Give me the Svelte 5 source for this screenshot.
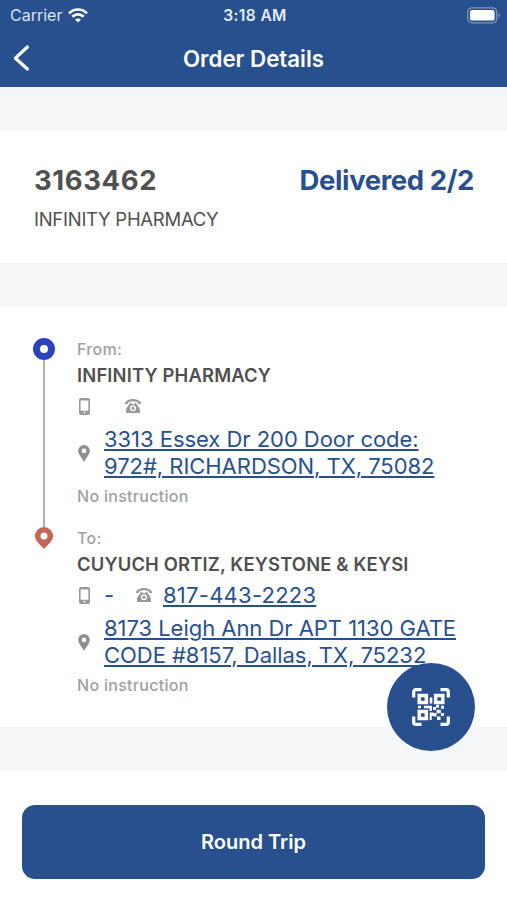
<script lang="ts">
  interface Stop {
    kind: 'from' | 'to';
    label: string;
    name: string;
    mobile: string;
    phone: string;
    address: string[];
    note: string;
  }

  const order = { id: '3163462', status: 'Delivered 2/2', client: 'INFINITY PHARMACY' };

  const stops: Stop[] = [
    {
      kind: 'from',
      label: 'From:',
      name: 'INFINITY PHARMACY',
      mobile: '',
      phone: '',
      address: ['3313 Essex Dr 200 Door code:', '972#, RICHARDSON, TX, 75082'],
      note: 'No instruction'
    },
    {
      kind: 'to',
      label: 'To:',
      name: 'CUYUCH ORTIZ, KEYSTONE & KEYSI',
      mobile: '-',
      phone: '817-443-2223',
      address: ['8173 Leigh Ann Dr APT 1130 GATE', 'CODE #8157, Dallas, TX, 75232'],
      note: 'No instruction'
    }
  ];
</script>

<div class="screen">
  <header>
    <div class="status-bar">
      <div class="carrier">
        <span>Carrier</span>
        <svg width="20" height="15" viewBox="0 0 20 15" fill="none" stroke="#fff" stroke-width="2.7">
          <path d="M1 5.4C6 .2 14 .2 19 5.4" />
          <path d="M4.3 8.8c3.2-3.2 8.2-3.2 11.4 0" />
          <path d="M10 14.6l-3-3c1.7-1.6 4.3-1.6 6 0z" fill="#fff" stroke="none" />
        </svg>
      </div>
      <span class="time">3:18 AM</span>
      <div class="battery">
        <svg width="34" height="17" viewBox="0 0 34 17">
          <rect x=".8" y=".8" width="29" height="15" rx="4.3" fill="none" stroke="#7e97c0" stroke-width="1.3" />
          <rect x="3" y="3" width="24.6" height="10.6" rx="2.2" fill="#fff" />
          <path d="M31.6 6.2c1.8.6 1.8 3.8 0 4.4z" fill="#7e97c0" />
        </svg>
      </div>
    </div>
    <div class="nav-bar">
      <button class="back" aria-label="Back">
        <svg width="18" height="28" viewBox="0 0 18 28" fill="none" stroke="#fff" stroke-width="3.2" stroke-linecap="round" stroke-linejoin="round">
          <path d="M15.4 3L3.4 14.2l12 10.8" />
        </svg>
      </button>
      <h1>Order Details</h1>
    </div>
  </header>

  <section class="summary">
    <div class="summary-row">
      <span class="order-id">{order.id}</span>
      <span class="order-status">{order.status}</span>
    </div>
    <div class="client">{order.client}</div>
  </section>

  <section class="route">
    {#each stops as stop}
      <div class="stop">
        <div class="track">
          {#if stop.kind === 'from'}
            <span class="dot"></span>
            <span class="line"></span>
          {:else}
            <svg class="pin" width="18" height="22" viewBox="0 0 18 22" fill="#c46655">
              <path fill-rule="evenodd" d="M9 0a9 9 0 0 1 9 9c0 4.6-4.6 8.4-9 13C4.600 17.400 0 13.600 0 9a9 9 0 0 1 9-9zm0 5.600a3.500 3.500 0 1 0 0 7 3.500 3.500 0 0 0 0-7z" />
            </svg>
          {/if}
        </div>
        <div class="details">
          <div class="label">{stop.label}</div>
          <div class="name">{stop.name}</div>
          <div class="contacts">
            <svg width="11" height="17" viewBox="0 0 11 17" fill="#999">
              <path fill-rule="evenodd" d="M2 0h7a2 2 0 0 1 2 2v13a2 2 0 0 1-2 2H2a2 2 0 0 1-2-2V2a2 2 0 0 1 2-2zm-.4 2.400v10.300h7.800V2.400zM5.500 13.800a.9.9 0 1 0 0 1.800.9.9 0 0 0 0-1.800z" />
            </svg>
            <span class="mobile" class:blank={!stop.mobile}>{stop.mobile}</span>
            <svg class="handset" width="16" height="14" viewBox="0 0 16 14" fill="#999">
              <path d="M0 5.200V3.700C1.500 1.200 4.500 0 8 0s6.500 1.200 8 3.700v1.500l-3.400-.7V2.900C9.800 1.900 6.200 1.900 3.400 2.900v1.600z" />
              <path fill-rule="evenodd" d="M4.700 3.800h1.500v1.100h3.600V3.800h1.500v1.300c1.500 1.800 3.400 3.700 3.700 6V14H1v-2.900c.3-2.300 2.200-4.200 3.700-6zM8 6.200a3 3 0 1 0 0 6 3 3 0 0 0 0-6z" />
              <circle cx="8" cy="9.200" r="1.600" />
            </svg>
            {#if stop.phone}
              <span class="link phone">{stop.phone}</span>
            {/if}
          </div>
          <div class="address">
            <svg width="12" height="17" viewBox="0 0 11 16" fill="#8e8e93">
              <path fill-rule="evenodd" d="M5.500 0A5.500 5.500 0 0 1 11 5.500C11 9 7.500 12 5.500 16 3.500 12 0 9 0 5.500A5.500 5.500 0 0 1 5.500 0zm0 3.400a2.200 2.200 0 1 0 0 4.400 2.200 2.200 0 0 0 0-4.400z" />
            </svg>
            <div class="address-lines">
              {#each stop.address as line}
                <div class="link">{line}</div>
              {/each}
            </div>
          </div>
          <div class="note">{stop.note}</div>
        </div>
      </div>
    {/each}
  </section>

  <footer>
    <button class="round-trip">Round Trip</button>
  </footer>

  <button class="scan" aria-label="Scan code">
    <svg width="38" height="38" viewBox="0 0 38 38" fill="#fff">
      <path d="M9.500 1.700H3.700a2 2 0 0 0-2 2v5.800M28.500 1.700h5.800a2 2 0 0 1 2 2v5.800M9.500 36.300H3.700a2 2 0 0 1-2-2v-5.800M28.500 36.300h5.800a2 2 0 0 0 2-2v-5.800" fill="none" stroke="#fff" stroke-width="3.200" />
      <path fill-rule="evenodd" d="M5.500 5.700h10.600v10.600H5.500zm3.500 3.500v3.600h3.600V9.200zM21.900 5.700h10.600v10.600H21.900zm3.500 3.500v3.600H29V9.200zM5.500 21.700h10.600v10.600H5.500zm3.500 3.500v3.600h3.600v-3.600z" />
      <path d="M17.700 9.500h2.600v6h-2.600zM6 17.700h3v2.600H6zM12 17.700h8v5h-2.600v-2.400H12zM17.700 24.500h4V28h-2v4h-2zM21 19h3v3h-3zM24 16.800h3v3h-3zM29 17.700h3v3h-3zM24.500 21.800h4.300v3.400h-4.300zM29 25h3v3h-3zM21.500 25h3v3.500h-3zM25 28.500h3.500V32H25z" />
    </svg>
  </button>
</div>

<style>
  :global(body) {
    background: #f4f6f8;
  }

  .screen {
    position: relative;
    height: 900px;
    display: flex;
    flex-direction: column;
    overflow: hidden;
    font-family: Inter, sans-serif;
    color: #505050;
    white-space: nowrap;
  }

  button {
    border: 0;
    padding: 0;
    font-family: inherit;
    color: #fff;
    background: #28508f;
  }

  svg {
    display: block;
    flex-shrink: 0;
  }

  header {
    height: 87px;
    flex-shrink: 0;
    color: #fff;
    background: #28508f;
  }

  .status-bar {
    height: 30px;
    padding: 0 7px 0 10px;
    display: grid;
    grid-template-columns: 1fr auto 1fr;
    align-items: center;
    font-size: 16px;
  }

  .carrier {
    display: flex;
    align-items: center;
    gap: 6px;
    color: #d9e3f3;
  }

  .time {
    font-weight: 600;
    font-size: 15.5px;
    letter-spacing: 0.4px;
    color: #e6eefa;
  }

  .battery {
    display: flex;
    justify-content: flex-end;
  }

  .battery svg {
    margin-right: -1px;
  }

  .nav-bar {
    height: 56px;
    padding: 0 12px;
    display: grid;
    grid-template-columns: 18px 1fr 18px;
    align-items: center;
  }

  h1 {
    margin: 0;
    text-align: center;
    font-size: 22.3px;
    font-weight: 600;
  }

  .summary {
    height: 133px;
    margin: 43px 0;
    padding: 32px 33px 0 34px;
    box-sizing: border-box;
    flex-shrink: 0;
    background: #fff;
  }

  .summary-row {
    display: flex;
    justify-content: space-between;
    line-height: 37px;
    font-size: 27.5px;
    font-weight: 700;
  }

  .order-id {
    letter-spacing: 0.6px;
  }

  .order-status {
    letter-spacing: -0.4px;
    color: #28508f;
  }

  .client {
    margin-top: 8px;
    line-height: 24px;
    font-size: 18.5px;
    letter-spacing: -0.27px;
  }

  .route {
    height: 421px;
    padding: 32px 33px 0;
    box-sizing: border-box;
    flex-shrink: 0;
    background: #fff;
  }

  .stop {
    height: 189px;
    display: flex;
    gap: 22px;
  }

  .track {
    width: 22px;
    display: flex;
    flex-direction: column;
    align-items: center;
  }

  .dot {
    width: 22px;
    height: 22px;
    box-sizing: border-box;
    border: 7px solid #2b43bd;
    border-radius: 50%;
  }

  .line {
    width: 2px;
    flex: 1;
    background: #b0b0b0;
  }

  .label,
  .note {
    line-height: 22px;
    font-size: 16px;
    font-weight: 500;
    letter-spacing: 0.3px;
    color: #a0a0a2;
  }

  .name {
    line-height: 31px;
    font-size: 18.4px;
    font-weight: 600;
    letter-spacing: 0.16px;
  }

  .contacts {
    height: 30px;
    padding-left: 2px;
    display: flex;
    align-items: center;
  }

  .mobile {
    width: 11px;
    margin: 0 21px 0 14px;
    font-size: 22px;
    color: #28508f;
  }

  .mobile.blank {
    width: 0;
  }

  .handset {
    margin-right: 11px;
  }

  .address {
    margin: 5px 0;
    padding-left: 1px;
    display: flex;
    align-items: center;
    gap: 14px;
  }

  .address-lines {
    line-height: 27px;
  }

  .link {
    font-size: 22px;
    letter-spacing: -0.04px;
    color: #28508f;
    text-decoration: underline;
    text-decoration-thickness: 1.5px;
    text-underline-offset: 2px;
  }

  .phone {
    letter-spacing: 0.25px;
  }

  .address-lines .link {
    width: fit-content;
  }

  footer {
    flex: 1;
    margin-top: 43px;
    padding: 35px 22px 0;
    background: #fff;
  }

  .round-trip {
    width: 100%;
    height: 74px;
    border-radius: 13px;
    font-size: 20px;
    font-weight: 600;
  }

  .scan {
    position: absolute;
    left: 387px;
    top: 663px;
    width: 88px;
    height: 88px;
    border-radius: 50%;
    display: grid;
    place-items: center;
  }
</style>
